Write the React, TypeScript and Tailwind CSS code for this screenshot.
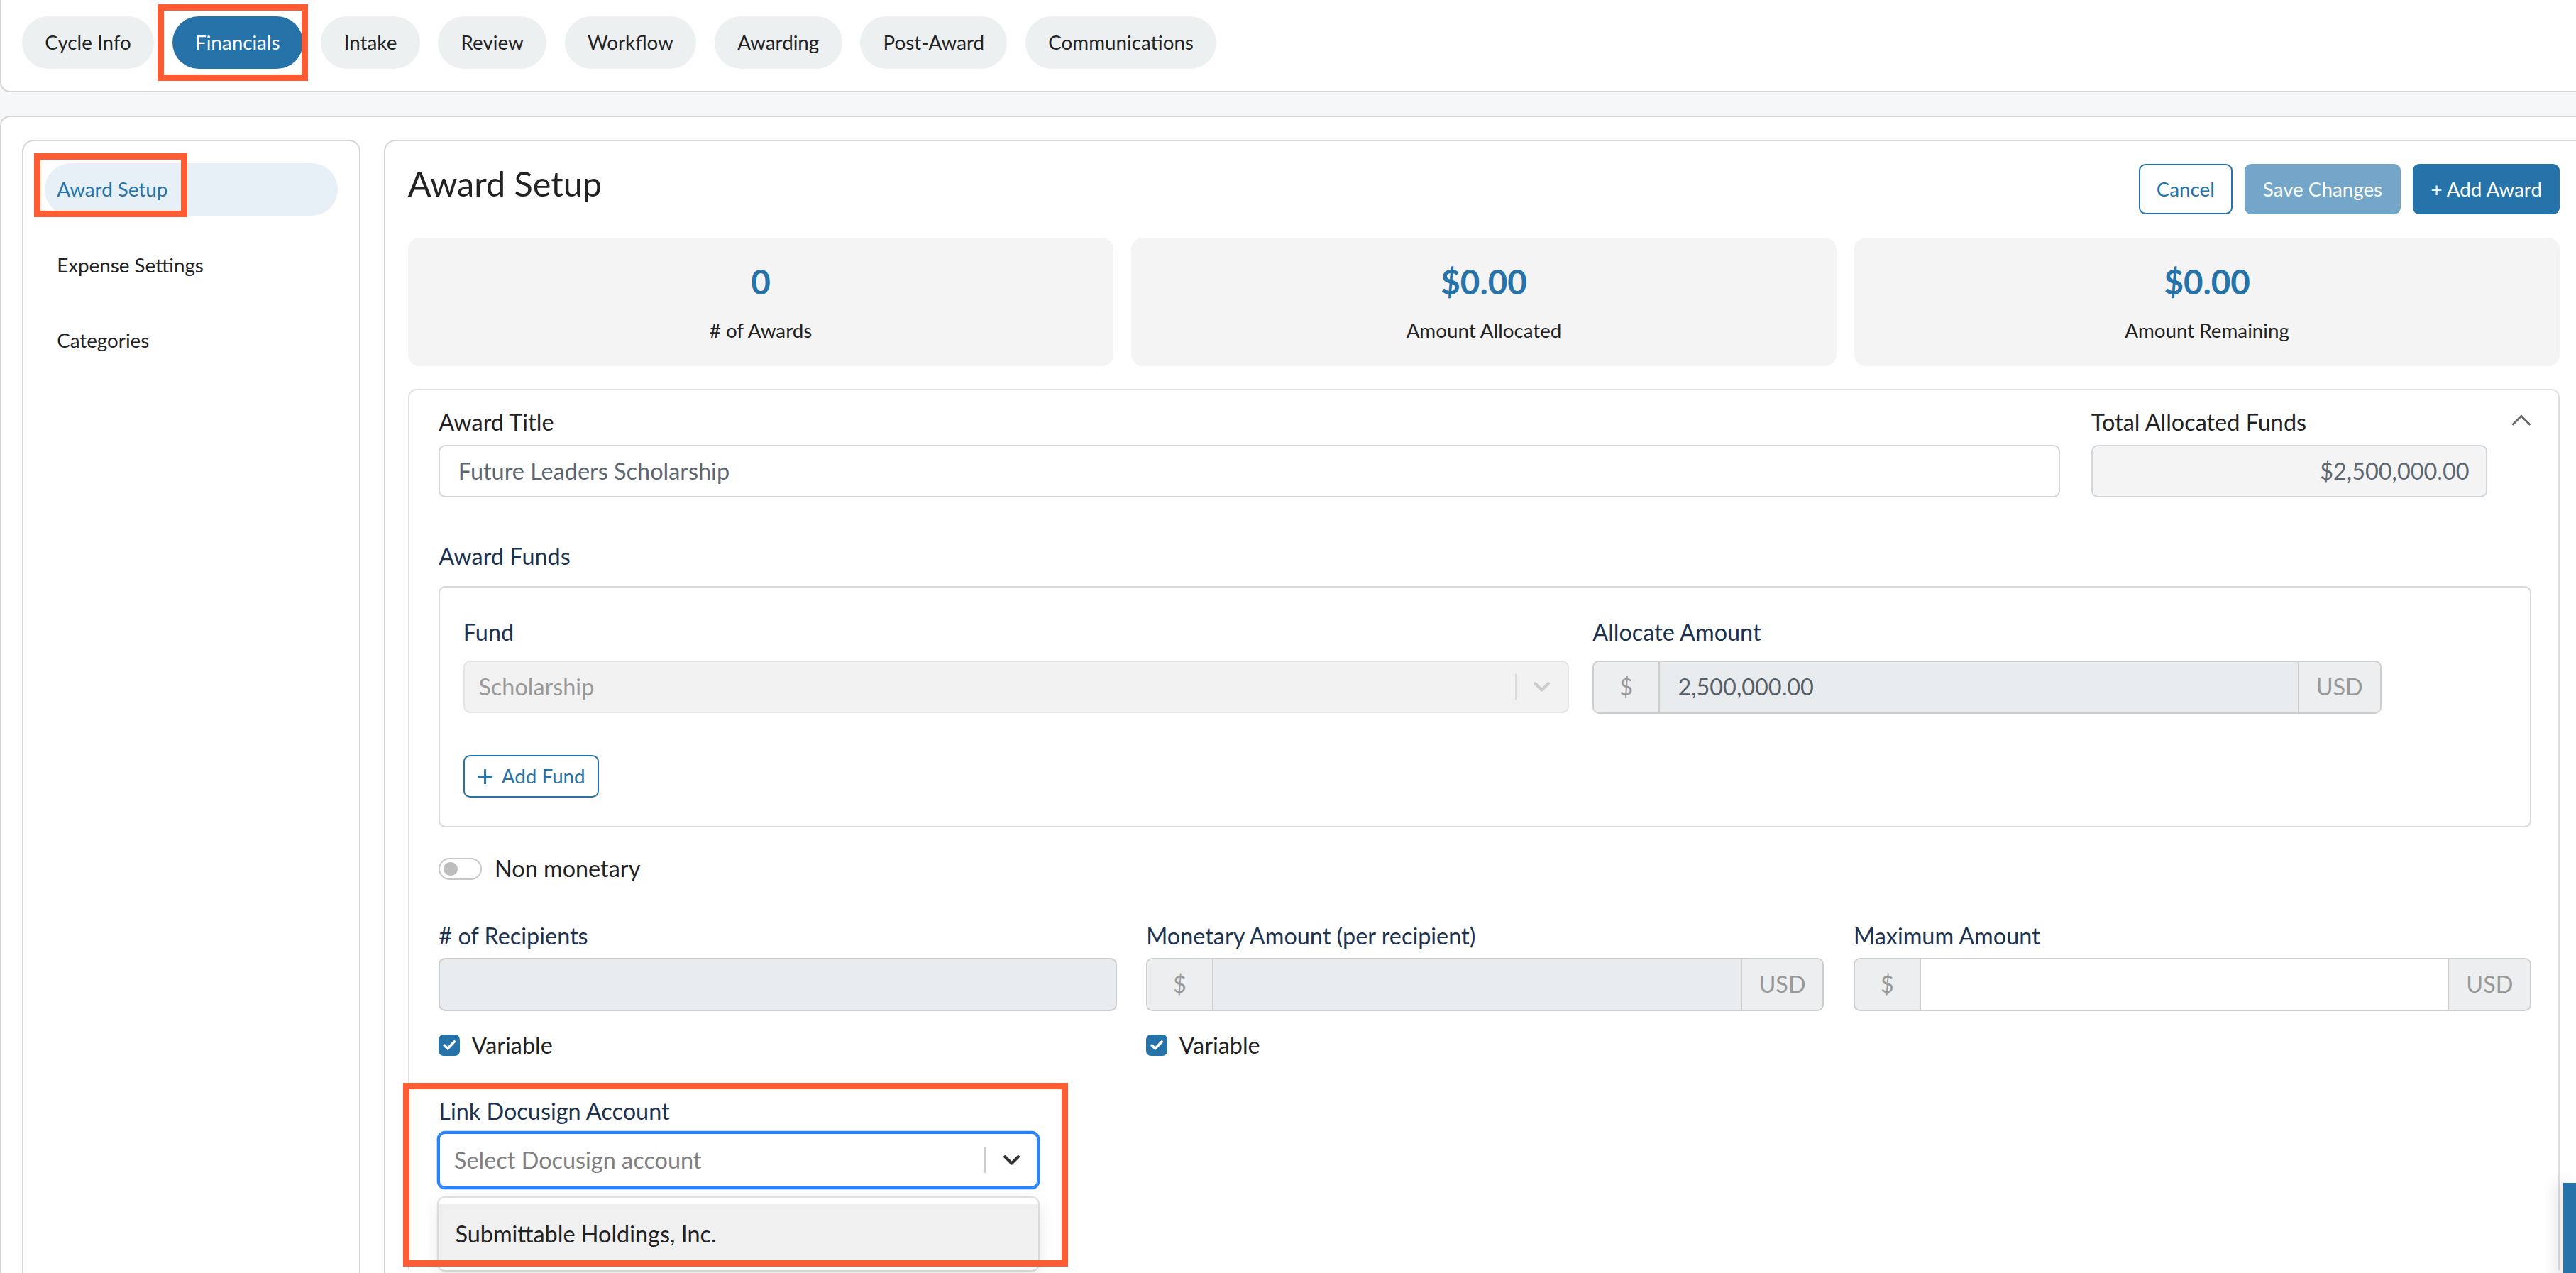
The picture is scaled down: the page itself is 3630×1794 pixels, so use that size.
import React from "react";

const tabs = [
  "Cycle Info",
  "Financials",
  "Intake",
  "Review",
  "Workflow",
  "Awarding",
  "Post-Award",
  "Communications",
];

const sideItems = ["Award Setup", "Expense Settings", "Categories"];

const stats = [
  { value: "0", label: "# of Awards" },
  { value: "$0.00", label: "Amount Allocated" },
  { value: "$0.00", label: "Amount Remaining" },
];

function Label({
  children,
  navy = true,
  className = "",
}: {
  children: React.ReactNode;
  navy?: boolean;
  className?: string;
}) {
  return (
    <div
      className={`text-[14px] leading-[20px] ${navy ? "text-[#1b3250]" : "text-[#222]"} ${className}`}
    >
      {children}
    </div>
  );
}

function AmountGroup({ value, disabled }: { value?: string; disabled?: boolean }) {
  return (
    <div className="flex h-[32.5px] overflow-hidden rounded-[4px] border border-[#cdcdcd] text-[14px]">
      <div className="flex w-[40px] shrink-0 items-center justify-center border-r border-[#cdcdcd] bg-[#eceeef] text-[#999]">
        $
      </div>
      <div
        className={`flex flex-1 items-center pl-[11px] text-[#555d66] ${disabled ? "bg-[#e9ecef]" : "bg-white"}`}
      >
        {value}
      </div>
      <div className="flex w-[50px] shrink-0 items-center justify-center border-l border-[#cdcdcd] bg-[#eceeef] text-[#999]">
        USD
      </div>
    </div>
  );
}

function Check() {
  return (
    <span className="flex h-[13px] w-[13px] items-center justify-center rounded-[3px] bg-[#2673aa]">
      <svg width="8" height="7" viewBox="0 0 8 7" fill="none">
        <path d="M1 3.6 L3 5.5 L7 1.3" stroke="white" strokeWidth="1.6" strokeLinecap="round" strokeLinejoin="round" />
      </svg>
    </span>
  );
}

function TopTabs() {
  return (
    <div className="flex h-[56px] gap-[11px] rounded-bl-[6px] border-b border-l border-[#d4d4d4] bg-white pl-[12.5px] pt-[9.9px]">
      {tabs.map((t) => (
        <div
          key={t}
          className={`flex h-[32px] items-center rounded-full px-[14px] text-[12px] ${
            t === "Financials" ? "bg-[#2673aa] text-white" : "bg-[#edf0f1] text-[#222]"
          }`}
        >
          {t}
        </div>
      ))}
    </div>
  );
}

function Sidebar() {
  return (
    <div className="flex w-[206px] shrink-0 flex-col gap-[14px] rounded-t-[7px] border-l border-r border-t border-[#d6d6d6] px-[13px] pt-[13.3px]">
      {sideItems.map((s, i) => (
        <div
          key={s}
          className={`flex h-[32px] items-center rounded-full pl-[7.5px] text-[12px] ${
            i === 0 ? "bg-[#e7f0f7] text-[#2673aa]" : "text-[#222]"
          }`}
        >
          {s}
        </div>
      ))}
    </div>
  );
}

function AwardBox() {
  return (
    <div className="mt-[14px] rounded-t-[5px] border-l border-r border-t border-[#dde0e3] pl-[18px] pr-[16.5px] pt-[9.5px]">
      {/* title row */}
      <div className="flex">
        <div className="flex-1">
          <Label navy={false}>Award Title</Label>
          <div className="mt-[3.5px] flex h-[32px] items-center rounded-[4px] border border-[#d1d6db] pl-[11px] text-[14px] text-[#5b6670]">
            Future Leaders Scholarship
          </div>
        </div>
        <div className="ml-[19px] w-[241px]">
          <Label navy={false}>Total Allocated Funds</Label>
          <div className="mt-[3.5px] flex h-[32px] items-center justify-end rounded-[4px] border border-[#d1d6db] bg-[#f4f4f4] pr-[10px] text-[14px] text-[#5b6670]">
            $2,500,000.00
          </div>
        </div>
        <div className="flex w-[27px] justify-end pt-[4.8px]">
          <svg width="12" height="7" viewBox="0 0 12 7" fill="none">
            <polyline points="0.6,6.4 6,1 11.4,6.4" stroke="#666" strokeWidth="1.2" />
          </svg>
        </div>
      </div>

      {/* award funds */}
      <Label className="mt-[26px]">Award Funds</Label>
      <div className="mt-[8px] rounded-[4px] border border-[#d8d8d8] pb-[17px] pl-[14px] pt-[17.5px]">
        <div className="flex gap-[14.5px]">
          <div className="w-[673px]">
            <Label>Fund</Label>
            <div className="mt-[7px] flex h-[32px] items-center rounded-[4px] border border-[#e4e4e4] bg-[#f2f2f2] text-[14px] text-[#999]">
              <span className="flex-1 pl-[8.5px]">Scholarship</span>
              <span className="h-[16px] w-px bg-[#dcdcdc]" />
              <span className="flex w-[31px] justify-center">
                <svg width="10" height="6" viewBox="0 0 10 6" fill="none">
                  <polyline points="1,1 5,5 9,1" stroke="#cccccc" strokeWidth="1.8" strokeLinecap="round" strokeLinejoin="round" />
                </svg>
              </span>
            </div>
          </div>
          <div className="w-[480px]">
            <Label>Allocate Amount</Label>
            <div className="mt-[7px]">
              <AmountGroup value="2,500,000.00" disabled />
            </div>
          </div>
        </div>
        <button
          type="button"
          className="mt-[25px] flex h-[26px] items-center gap-[5px] rounded-[4px] border border-[#2673aa] px-[7.5px] text-[12px] text-[#2673aa]"
        >
          <svg width="10" height="10" viewBox="0 0 10 10" fill="none">
            <path d="M5 0.5V9.5M0.5 5H9.5" stroke="#2673aa" strokeWidth="1.3" />
          </svg>
          Add Fund
        </button>
      </div>

      {/* non monetary */}
      <div className="mt-[15.5px] flex h-[20px] items-center gap-[8px]">
        <span className="flex h-[13.5px] w-[26px] items-center rounded-full border border-[#c8c8c8] bg-white pl-[2px]">
          <span className="h-[8.5px] w-[8.5px] rounded-full bg-[#bdbdbd]" />
        </span>
        <span className="text-[14px] text-[#222]">Non monetary</span>
      </div>

      {/* amounts row */}
      <div className="mt-[21px] grid grid-cols-3 gap-x-[18px]">
        <div>
          <Label># of Recipients</Label>
          <div className="mt-[3px] h-[32.5px] rounded-[4px] border border-[#cdcdcd] bg-[#e9ecef]" />
          <div className="mt-[11px] flex h-[20px] items-center gap-[7px] text-[14px]">
            <Check />
            Variable
          </div>
        </div>
        <div>
          <Label>Monetary Amount (per recipient)</Label>
          <div className="mt-[3px]">
            <AmountGroup disabled />
          </div>
          <div className="mt-[11px] flex h-[20px] items-center gap-[7px] text-[14px]">
            <Check />
            Variable
          </div>
        </div>
        <div>
          <Label>Maximum Amount</Label>
          <div className="mt-[3px]">
            <AmountGroup />
          </div>
        </div>
      </div>

      {/* docusign */}
      <div className="mt-[20px] w-[365px]">
        <Label>Link Docusign Account</Label>
        <div className="mt-[3px] flex h-[33.6px] items-center rounded-[4px] border border-[#2684ff] text-[14px] shadow-[0_0_0_1px_#2684ff]">
          <span className="flex-1 pl-[8.5px] text-[#808080]">Select Docusign account</span>
          <span className="h-[16px] w-px bg-[#cccccc]" />
          <span className="flex w-[31px] justify-center">
            <svg width="10" height="6" viewBox="0 0 10 6" fill="none">
              <polyline points="1,1 5,5 9,1" stroke="#333" strokeWidth="1.8" strokeLinecap="round" strokeLinejoin="round" />
            </svg>
          </span>
        </div>
        <div className="mt-[6px] rounded-[4px] bg-white py-[4px] shadow-[0_0_0_1px_rgba(0,0,0,0.1),0_4px_11px_rgba(0,0,0,0.1)]">
          <div className="bg-[#f0f0f0] px-[10px] py-[8px] text-[14px] leading-[20px] text-[#222]">
            Submittable Holdings, Inc.
          </div>
        </div>
      </div>
    </div>
  );
}

function Content() {
  return (
    <div className="w-[1340px] shrink-0 rounded-tl-[7px] border-l border-t border-[#d6d6d6] pl-[13.5px] pt-[13.7px]">
      <div className="w-[1310px]">
        <div className="flex items-start justify-between">
          <h1 className="text-[21px] leading-[24px] font-normal text-[#222]">Award Setup</h1>
          <div className="flex gap-[7.5px] text-[12px]">
            <button type="button" className="h-[30.5px] rounded-[4px] border border-[#2673aa] bg-white px-[10px] text-[#2673aa]">
              Cancel
            </button>
            <button type="button" className="h-[30.5px] rounded-[4px] bg-[#74a6c9] px-[11px] text-white">
              Save Changes
            </button>
            <button type="button" className="h-[30.5px] rounded-[4px] bg-[#2673aa] px-[11px] text-white">
              + Add Award
            </button>
          </div>
        </div>

        <div className="mt-[14.6px] grid grid-cols-3 gap-[10.5px]">
          {stats.map((s) => (
            <div key={s.label} className="flex h-[78px] flex-col items-center rounded-[7px] bg-[#f4f4f4] pt-[14px]">
              <div className="text-[20.5px] leading-[25px] font-bold text-[#2673aa]">{s.value}</div>
              <div className="mt-[9px] text-[12px] leading-[16px] text-[#222]">{s.label}</div>
            </div>
          ))}
        </div>

        <AwardBox />
      </div>
    </div>
  );
}

export default function App() {
  return (
    <div className="relative h-[775px] w-[1568px] overflow-hidden bg-[#f6f7f9] font-['Lato',sans-serif] text-[#222] [zoom:2.3151]">
      <TopTabs />
      <div className="mt-[14.4px] flex h-full gap-[14.6px] rounded-tl-[6px] border-l border-t border-[#d4d4d4] bg-white pl-[12.4px] pt-[14px]">
        <Sidebar />
        <Content />
      </div>

      {/* annotation outlines */}
      <div className="absolute left-[96px] top-[2.6px] h-[46.6px] w-[91.6px] border-[4px] border-[#ff5c33]" />
      <div className="absolute left-[20.7px] top-[93.3px] h-[39px] w-[93.3px] border-[4px] border-[#ff5c33]" />
      <div className="absolute left-[245.2px] top-[659px] h-[112px] w-[405px] border-[4px] border-[#ff5c33]" />

      {/* floating tab at right edge */}
      <div className="absolute right-0 top-[720px] h-[60px] w-[8px] bg-[#2673aa] shadow-[-4px_0_10px_rgba(0,0,0,0.12)]" />
    </div>
  );
}
